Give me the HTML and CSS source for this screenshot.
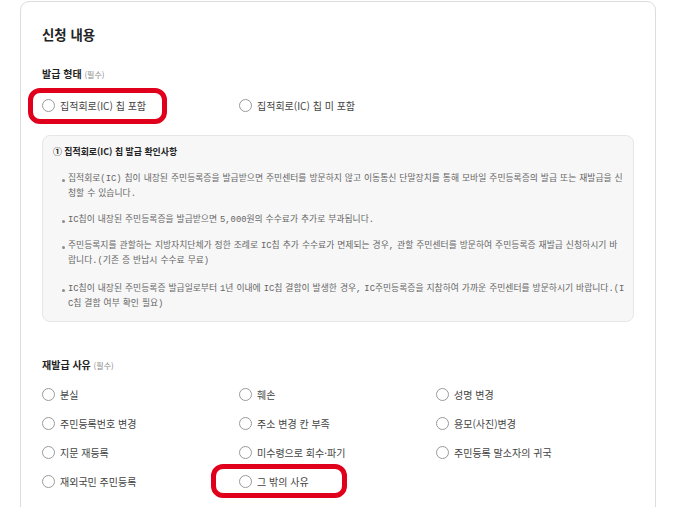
FILE: index.html
```html
<!DOCTYPE html>
<html lang="ko">
<head>
<meta charset="utf-8">
<link rel="stylesheet" href="styles.css">
</head>
<body>
<div class="card">
  <h2 class="title">신청 내용</h2>

  <div class="field-label">발급 형태 <span class="req">(필수)</span></div>
  <div class="radio-row">
    <label class="radio highlight"><span class="circle"></span>집적회로(IC) 칩 포함</label>
    <label class="radio"><span class="circle"></span>집적회로(IC) 칩 미 포함</label>
  </div>

  <div class="info">
    <div class="info-title">① 집적회로(IC) 칩 발급 확인사항</div>
    <ul class="info-list">
      <li>집적회로(IC) 칩이 내장된 주민등록증을 발급받으면 주민센터를 방문하지 않고 이동통신 단말장치를 통해 모바일 주민등록증의 발급 또는 재발급을 신청할 수 있습니다.</li>
      <li>IC칩이 내장된 주민등록증을 발급받으면 5,000원의 수수료가 추가로 부과됩니다.</li>
      <li>주민등록지를 관할하는 지방자치단체가 정한 조례로 IC칩 추가 수수료가 면제되는 경우, 관할 주민센터를 방문하여 주민등록증 재발급 신청하시기 바랍니다.(기존 증 반납시 수수료 무료)</li>
      <li>IC칩이 내장된 주민등록증 발급일로부터 1년 이내에 IC칩 결함이 발생한 경우, IC주민등록증을 지참하여 가까운 주민센터를 방문하시기 바랍니다.(IC칩 결함 여부 확인 필요)</li>
    </ul>
  </div>

  <div class="field-label reason-label">재발급 사유 <span class="req">(필수)</span></div>
  <div class="radio-grid">
    <label class="radio"><span class="circle"></span>분실</label>
    <label class="radio"><span class="circle"></span>훼손</label>
    <label class="radio"><span class="circle"></span>성명 변경</label>
    <label class="radio"><span class="circle"></span>주민등록번호 변경</label>
    <label class="radio"><span class="circle"></span>주소 변경 칸 부족</label>
    <label class="radio"><span class="circle"></span>용모(사진)변경</label>
    <label class="radio"><span class="circle"></span>지문 재등록</label>
    <label class="radio"><span class="circle"></span>미수령으로 회수·파기</label>
    <label class="radio"><span class="circle"></span>주민등록 말소자의 귀국</label>
    <label class="radio"><span class="circle"></span>재외국민 주민등록</label>
    <label class="radio highlight second"><span class="circle"></span>그 밖의 사유</label>
  </div>
</div>
</body>
</html>
```

FILE: styles.css
```css
*, *::before, *::after { box-sizing: border-box; }
html, body {
  margin: 0;
  padding: 0;
  background: #ffffff;
  font-family: "Noto Sans CJK KR", "Noto Sans", sans-serif;
  color: #333333;
  overflow: hidden;
}
.card {
  margin: 1px 0 0 20px;
  width: 636px;
  min-height: 560px;
  border: 1px solid #dddddd;
  border-radius: 9px;
  padding: 23px 21px 20px 21px;
}
.title {
  margin: 0;
  font-size: 13.4px;
  line-height: 18px;
  font-weight: 700;
  color: #222222;
}
.field-label {
  margin-top: 24px;
  font-size: 10px;
  line-height: 14px;
  font-weight: 700;
  color: #222222;
}
.req {
  font-size: 8px;
  font-weight: 400;
  color: #888888;
}
.radio-row {
  margin-top: 15px;
  display: grid;
  grid-template-columns: 197px 197px;
}
.radio {
  position: relative;
  display: flex;
  align-items: center;
  height: 16px;
  font-size: 10px;
  color: #444444;
  white-space: nowrap;
}
.circle {
  width: 13px;
  height: 13px;
  border: 1px solid #9a9a9a;
  border-radius: 50%;
  background: #fff;
  margin-right: 5px;
  flex: none;
}
.highlight::before {
  content: "";
  position: absolute;
  left: -14px;
  top: -9px;
  width: 139px;
  height: 36px;
  border: 5px solid #e0001b;
  border-radius: 12px;
}
.highlight.second::before {
  left: -28px;
  top: -9px;
  width: 136px;
  height: 34px;
}
.info {
  margin-top: 22px;
  background: #f7f7f7;
  border: 1px solid #e6e6e6;
  border-radius: 8px;
  padding: 9px 10px 9px 10px;
}
.info-title {
  font-size: 8.9px;
  line-height: 14px;
  font-weight: 700;
  color: #222222;
}
.info-list {
  list-style: none;
  margin: 13px 0 0 0;
  padding: 0 0 0 15px;
}
.info-list li {
  position: relative;
  width: 557px;
  font-family: "Liberation Mono", "Noto Sans CJK KR", monospace;
  font-size: 8.8px;
  word-spacing: -2.28px;
  line-height: 15px;
  color: #666666;
  word-break: break-all;
  margin-bottom: 11px;
}
.info-list li:nth-child(3) { margin-bottom: 13px; }
.info-list li:last-child { margin-bottom: 0; }
.info-list li::before {
  content: "";
  position: absolute;
  left: -6px;
  top: 7px;
  width: 3px;
  height: 3px;
  border-radius: 50%;
  background: #8c8c8c;
}
.reason-label { margin-top: 36px; }
.radio-grid {
  margin-top: 13px;
  display: grid;
  grid-template-columns: 197px 197px 197px;
  row-gap: 13px;
}
```
